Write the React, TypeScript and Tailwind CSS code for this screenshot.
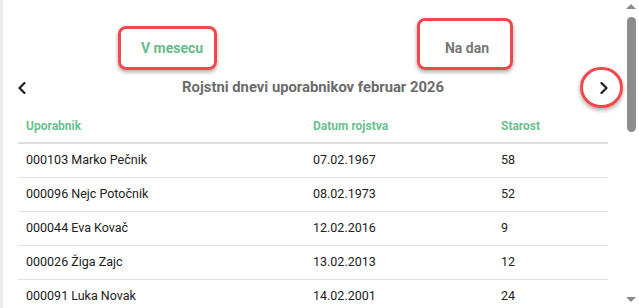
import React from 'react';

const ROWS = [
  { user: '000103 Marko Pečnik', date: '07.02.1967', age: '58' },
  { user: '000096 Nejc Potočnik', date: '08.02.1973', age: '52' },
  { user: '000044 Eva Kovač', date: '12.02.2016', age: '9' },
  { user: '000026 Žiga Zajc', date: '13.02.2013', age: '12' },
  { user: '000091 Luka Novak', date: '14.02.2001', age: '24' },
];

const Chevron: React.FC<{ dir: 'left' | 'right' }> = ({ dir }) => (
  <svg width="8" height="12" viewBox="0 0 8 12" fill="none">
    <polyline
      points={dir === 'left' ? '6.5,1 1.5,6 6.5,11' : '1.5,1 6.5,6 1.5,11'}
      stroke="#1f1f1f"
      strokeWidth="2.2"
      strokeLinecap="round"
      strokeLinejoin="round"
    />
  </svg>
);

const App: React.FC = () => {
  return (
    <div className="relative w-[639px] h-[308px] overflow-hidden bg-white flex font-['Roboto',sans-serif]">
      {/* card edge */}
      <div className="w-[3px] shrink-0 bg-[#ececec]"></div>

      <div className="w-[620px] shrink-0">
        {/* Tabs */}
        <div className="h-[70px] flex items-start pt-[38px]">
          <div className="ml-[119px] w-[100px] text-center text-[14px] leading-[20px] font-bold text-[#66bb8a]">V mesecu</div>
          <div className="ml-[195px] w-[100px] text-center text-[14px] leading-[20px] font-bold text-[#787878]">Na dan</div>
        </div>

        {/* Title row */}
        <div className="h-[35px] flex items-center justify-between pl-[15px] pr-[15px]">
          <Chevron dir="left" />
          <h2 className="text-[14.8px] font-bold text-[#6b6b6b]">Rojstni dnevi uporabnikov februar 2026</h2>
          <Chevron dir="right" />
        </div>

        {/* Table */}
        <div className="mt-[5px] ml-[15px] w-[590px] text-[12.5px]">
          <div className="grid grid-cols-[287px_188px_115px] h-[34px] items-center border-b-2 border-[#dedede] text-[12px] font-bold text-[#6cbf8f]">
            <div className="pl-[8px]">Uporabnik</div>
            <div className="pl-[8px]">Datum rojstva</div>
            <div className="pl-[8px]">Starost</div>
          </div>
          {ROWS.map((r) => (
            <div key={r.user} className="grid grid-cols-[287px_188px_115px] h-[34px] items-center border-b border-[#e2e2e2] text-[#212121]">
              <div className="pl-[8px]">{r.user}</div>
              <div className="pl-[8px]">{r.date}</div>
              <div className="pl-[8px]">{r.age}</div>
            </div>
          ))}
        </div>
      </div>

      {/* Scrollbar */}
      <div className="w-[16px] shrink-0 flex flex-col items-center bg-white">
        <div className="mt-[4px] w-0 h-0 border-l-[5px] border-r-[5px] border-b-[5px] border-l-transparent border-r-transparent border-b-[#8a8a8a]"></div>
        <div className="mt-[8px] w-[9px] h-[115px] rounded-full bg-[#8c8c8c]"></div>
        <div className="mt-auto mb-[6px] w-0 h-0 border-l-[5px] border-r-[5px] border-t-[5px] border-l-transparent border-r-transparent border-t-[#8a8a8a]"></div>
      </div>

      {/* Annotations */}
      <div className="absolute left-[118px] top-[26px] w-[99px] h-[44px] rounded-[8px] border-[3px] border-[#f0484c] shadow-[0_2px_4px_rgba(0,0,0,0.35)]"></div>
      <div className="absolute left-[417px] top-[18px] w-[96px] h-[52px] rounded-[8px] border-[3px] border-[#f0484c] shadow-[0_2px_4px_rgba(0,0,0,0.35)]"></div>
      <div className="absolute left-[580px] top-[67px] w-[43px] h-[41px] rounded-full border-[3px] border-[#f0484c] shadow-[0_2px_4px_rgba(0,0,0,0.35)]"></div>
    </div>
  );
};

export default App;
